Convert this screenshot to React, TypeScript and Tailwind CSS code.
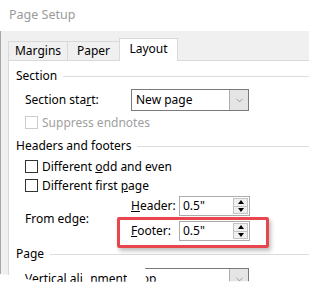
import { ChevronDown } from "lucide-react";

function Check({ disabled, label }: { disabled?: boolean; label: React.ReactNode }) {
  return (
    <div className="flex h-[13px] items-center pl-[16px]">
      <div
        className={`h-[13px] w-[13px] border bg-white ${
          disabled ? "border-[#cccccc]" : "border-[#333333]"
        }`}
      />
      <div className={`ml-[4px] leading-[16px] ${disabled ? "text-[#a0a0a0]" : ""}`}>{label}</div>
    </div>
  );
}

function Group({ title }: { title: string }) {
  return (
    <div className="flex h-[16px] items-center pl-[7px]">
      <div className="leading-[16px]">{title}</div>
      <div className="ml-[6px] flex-1 border-t border-[#dcdcdc]" />
    </div>
  );
}

function Select({ value }: { value: string }) {
  return (
    <div className="flex h-[22px] w-[118px] items-center border border-[#7a7a7a] bg-white">
      <div className="flex-1 pl-[4px] leading-[16px]">{value}</div>
      <div className="flex h-full w-[19px] items-center justify-center border-l border-[#adadad] bg-[#e5e5e5]">
        <ChevronDown size={11} strokeWidth={1.2} className="text-[#606060]" />
      </div>
    </div>
  );
}

function Spin({ value }: { value: string }) {
  return (
    <div className="flex h-[20px] w-[71px] items-center border border-[#ababab] bg-white">
      <div className="flex-1 pl-[3px] leading-[16px]">{value}</div>
      <div className="mr-[1px] flex h-[16px] w-[15px] flex-col border border-[#c4c4c4] bg-[#f0f0f0]">
        <div className="flex flex-1 items-center justify-center border-b border-[#c4c4c4]">
          <div className="h-0 w-0 border-x-[3px] border-b-[4px] border-x-transparent border-b-black" />
        </div>
        <div className="flex flex-1 items-center justify-center">
          <div className="h-0 w-0 border-x-[3px] border-t-[4px] border-x-transparent border-t-black" />
        </div>
      </div>
    </div>
  );
}

export default function App() {
  return (
    <div className="relative h-[294px] w-[309px] overflow-hidden bg-white font-['Noto_Sans',sans-serif] text-[12px] text-black">
      <div className="flex h-[31px] items-center pl-[9px] text-[12.5px] text-[#9a9a9a]">Page Setup</div>

      <div className="h-[263px] border-l border-[#a8a8a8] bg-[#f0f0f0] pl-[7px] pt-[7px]">
        <div className="flex h-[22px] items-end">
          <div className="flex h-[19px] w-[60px] items-center justify-center border-x border-t border-[#d9d9d9]">
            Margins
          </div>
          <div className="-ml-px flex h-[19px] w-[53px] items-center justify-center border-x border-t border-[#d9d9d9]">
            Paper
          </div>
          <div className="relative z-10 -mb-px -ml-px flex h-[23px] w-[59px] items-center justify-center border-x border-t border-[#d9d9d9] bg-white pb-[2px]">
            Layout
          </div>
        </div>

        <div className="h-[240px] border-l border-t border-[#d9d9d9] bg-white">
          <div className="pt-[7px]">
            <Group title="Section" />
          </div>

          <div className="mt-[5px] flex h-[22px] items-center pl-[16px]">
            <div className="w-[106px]">
              Section sta<span className="underline">r</span>t:
            </div>
            <Select value="New page" />
          </div>

          <div className="mt-[5px]">
            <Check disabled label="Suppress endnotes" />
          </div>

          <div className="mt-[9px]">
            <Group title="Headers and footers" />
          </div>

          <div className="mt-[6px]">
            <Check
              label={
                <>
                  Different <span className="underline">o</span>dd and even
                </>
              }
            />
          </div>
          <div className="mt-[6px]">
            <Check
              label={
                <>
                  Different first <span className="underline">p</span>age
                </>
              }
            />
          </div>

          <div className="mt-[4px] flex pl-[16px]">
            <div className="flex w-[106px] items-center">From edge:</div>
            <div className="flex flex-col gap-[5px]">
              <div className="flex items-center">
                <div className="w-[48px]">
                  <span className="underline">H</span>eader:
                </div>
                <Spin value={'0.5"'} />
              </div>
              <div className="flex items-center">
                <div className="w-[48px]">
                  <span className="underline">F</span>ooter:
                </div>
                <Spin value={'0.5"'} />
              </div>
            </div>
          </div>

          <div className="mt-[5px]">
            <Group title="Page" />
          </div>

          <div className="mt-[6px] flex h-[22px] items-center pl-[16px]">
            <div className="w-[106px]">
              Vertical ali<span className="underline">g</span>nment:
            </div>
            <Select value="Top" />
          </div>
        </div>
      </div>

      <div className="absolute left-[117px] top-[217px] h-[31px] w-[152px] rounded-[2px] border-[3px] border-[#e8464e] shadow-[2px_3px_4px_rgba(0,0,0,0.25)]" />

      <svg className="absolute left-0 top-0" width="309" height="294" viewBox="0 0 309 294">
        <path
          d="M0 274 L9 275 L40 282 L309 281 L309 294 L0 294 Z"
          fill="#ffffff"
        />
        <path d="M82 268 L90 267 L91 282 L83 282 Z" fill="#ffffff" />
        <path d="M127 263 L133 262 L145 266 L146 282 L127 282 Z" fill="#ffffff" />
      </svg>
    </div>
  );
}
